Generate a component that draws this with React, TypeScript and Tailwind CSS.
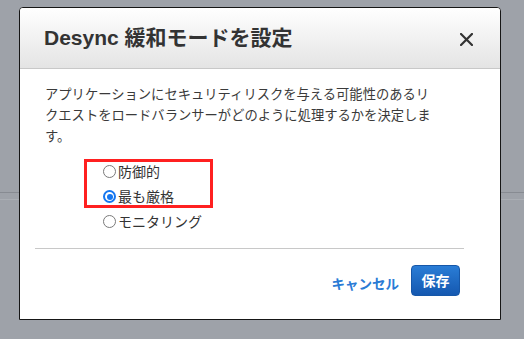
import React from "react";

const jp = { fontFamily: '"Noto Sans CJK JP", "Noto Sans", sans-serif' };
const title = { fontFamily: '"Liberation Sans", "Noto Sans CJK JP", sans-serif' };

function Radio({ checked, label }: { checked?: boolean; label: string }) {
  return (
    <div className="flex h-[25px] items-center">
      {checked ? (
        <span className="flex h-[13px] w-[13px] items-center justify-center rounded-full border-[2px] border-[#1577f0] bg-white">
          <span className="h-[6px] w-[6px] rounded-full bg-[#1577f0]" />
        </span>
      ) : (
        <span className="h-[13px] w-[13px] rounded-full border border-[#7a7a7a] bg-white" />
      )}
      <span className="ml-[2px] text-[14px] leading-[25px] text-[#333]">{label}</span>
    </div>
  );
}

export default function App() {
  return (
    <div className="relative h-[339px] w-[524px] overflow-hidden bg-[#9ea2a9]" style={jp}>
      <div className="pt-[192px]">
        <div className="h-px bg-[#878b92]" />
        <div className="mt-[6px] h-px bg-[#aaaeb4]" />
      </div>

      <div className="absolute left-[19px] top-[7px] flex h-[313px] w-[482px] flex-col rounded-t-[4px] border border-[#161616] bg-white">
        <div className="flex h-[61px] items-center justify-between rounded-t-[3px] border-b border-[#c8c8c8] bg-gradient-to-b from-white to-[#e4e4e4] pl-[24px] pr-[27px]">
          <div className="text-[21px] font-bold text-[#333]" style={title}>
            Desync 緩和モードを設定
          </div>
          <svg width="13" height="13" viewBox="0 0 13 13" className="mt-[2px]">
            <path d="M1 1 L12 12 M12 1 L1 12" stroke="#333" strokeWidth="2.2" strokeLinecap="square" />
          </svg>
        </div>

        <div className="px-[25px] pt-[14px]">
          <p className="w-[392px] text-[13.3px] leading-[21px] text-[#3a3a3a]">
            アプリケーションにセキュリティリスクを与える可能性のあるリクエストをロードバランサーがどのように処理するかを決定します。
          </p>
          <div className="relative mt-[13px] pl-[58px]">
            <Radio label="防御的" />
            <Radio checked label="最も厳格" />
            <Radio label="モニタリング" />
            <div className="absolute left-[39px] top-0 h-[49px] w-[129px] border-[3px] border-[#ff2020]" />
          </div>
        </div>

        <div className="ml-[15px] mt-[14px] h-px w-[429px] bg-[#c8c8c8]" />

        <div className="flex items-start justify-end pr-[40px] pt-[16px]">
          <span className="mt-[8px] text-[13.5px] font-bold text-[#2a7bd5]">キャンセル</span>
          <button className="ml-[12px] h-[31px] w-[49px] rounded-[4px] border border-[#1657a8] bg-gradient-to-b from-[#2a7dd6] to-[#1558b0] text-[14px] font-bold text-white">
            保存
          </button>
        </div>
      </div>
    </div>
  );
}
